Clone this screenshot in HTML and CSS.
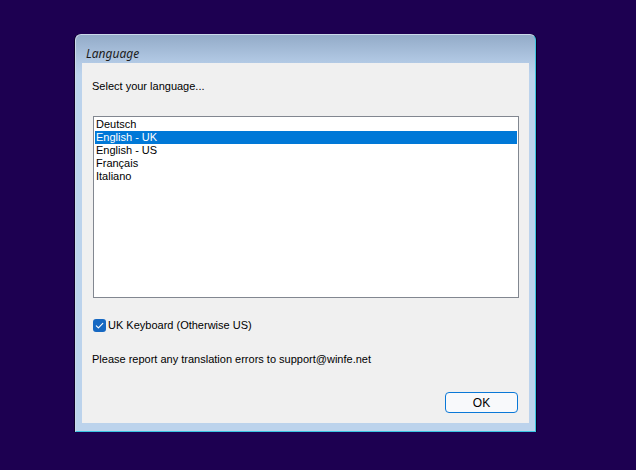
FILE: index.html
```html
<!DOCTYPE html>
<html>
<head>
<meta charset="utf-8">
<link rel="stylesheet" href="styles.css">
</head>
<body>
<div class="window">
  <div class="titlebar"><span class="title">Language</span></div>
  <div class="client">
    <div class="prompt">Select your language...</div>
    <div class="listbox">
      <div class="item">Deutsch</div>
      <div class="item selected">English - UK</div>
      <div class="item">English - US</div>
      <div class="item">Français</div>
      <div class="item">Italiano</div>
    </div>
    <label class="check">
      <span class="box"><svg width="13" height="13" viewBox="0 0 13 13"><path d="M3.3 6.8 L5.4 8.9 L9.8 4.4" fill="none" stroke="#fff" stroke-width="1.1" stroke-linecap="round" stroke-linejoin="round"/></svg></span>
      <span class="check-label">UK Keyboard (Otherwise US)</span>
    </label>
    <div class="note">Please report any translation errors to support@winfe.net</div>
    <div class="actions"><button class="btn">OK</button></div>
  </div>
</div>
</body>
</html>
```

FILE: styles.css
```css
html, body {
  margin: 0;
  padding: 0;
}
body {
  background: #1d0051;
  width: 636px;
  height: 470px;
  overflow: hidden;
  font-family: "Liberation Sans", Arial, sans-serif;
  font-size: 11px;
  color: #000;
}
.window {
  box-sizing: border-box;
  margin: 34px 0 0 75px;
  width: 461px;
  height: 398px;
  border: 1px solid #cbd9ea;
  border-right-color: #3cc4e2;
  border-bottom-color: #3cc4e2;
  border-radius: 6px 6px 0 0;
  background: linear-gradient(to bottom, #93abc8 0px, #b3cae5 28px, #bcd3ec 40px, #bcd3ec 100%);
  box-shadow: -1px 0 0 #0c0028, 1px 0 0 #0c0028;
  display: flex;
  flex-direction: column;
}
.titlebar {
  height: 28px;
  display: flex;
  align-items: center;
  padding-left: 10px;
}
.title {
  font-family: "Noto Sans", "Open Sans", sans-serif;
  font-style: italic;
  font-size: 12px;
  color: #1c1c1c;
  padding-top: 8px;
}
.client {
  margin: 0 6px;
  height: 360px;
  background: #f0f0f0;
  display: flex;
  flex-direction: column;
  padding: 0 11px 0 10px;
}
.prompt {
  margin-top: 15px;
  line-height: 16px;
}
.listbox {
  margin-top: 22px;
  margin-left: 1px;
  box-sizing: border-box;
  width: 426px;
  height: 182px;
  border: 1px solid #828790;
  background: #fff;
  padding: 1px;
}
.item {
  height: 13px;
  line-height: 13px;
  padding-left: 1px;
  white-space: nowrap;
}
.item.selected {
  background: #0078d7;
  color: #fff;
}
.check {
  margin-top: 21px;
  margin-left: 1px;
  display: flex;
  align-items: center;
  height: 13px;
  gap: 2px;
}
.box {
  width: 13px;
  height: 13px;
  border-radius: 3px;
  background: #1668c2;
  display: flex;
}
.check-label {
  line-height: 13px;
}
.note {
  margin-top: 19px;
  line-height: 16px;
}
.actions {
  margin-top: 25px;
  display: flex;
  justify-content: flex-end;
}
.btn {
  box-sizing: border-box;
  width: 73px;
  height: 21px;
  border: 1px solid #0a78d7;
  border-radius: 4px;
  background: #f8f9fb;
  font-family: "Liberation Sans", Arial, sans-serif;
  font-size: 12px;
  color: #000;
  padding: 0;
  margin-right: 0;
}
```
